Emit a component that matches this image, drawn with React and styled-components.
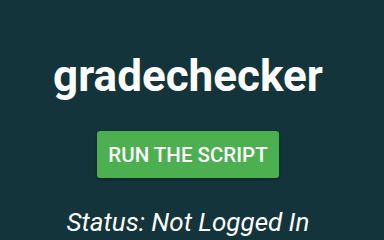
import React from "react";
import styled, { createGlobalStyle } from "styled-components";

const Global = createGlobalStyle`
  html, body { margin: 0; padding: 0; background: #13343a; }
  body { font-family: Roboto, "Noto Sans", sans-serif; }
`;

const Page = styled.div`
  box-sizing: border-box;
  width: 384px;
  height: 240px;
  padding-right: 8px;
  background: #13343a;
  display: flex;
  flex-direction: column;
  align-items: center;
  color: #ffffff;
  overflow: hidden;
`;

const Title = styled.h1`
  margin: 54px 0 0;
  font-size: 44px;
  font-weight: 700;
  line-height: 44px;
`;

const Button = styled.button`
  margin-top: 33px;
  height: 47px;
  padding: 0 11px;
  background: #4caf50;
  color: #ffffff;
  border: none;
  border-radius: 3px;
  font-family: Roboto, sans-serif;
  font-size: 20.5px;
  font-weight: 500;
  box-shadow: 0 2px 3px rgba(0, 0, 0, 0.25);
`;

const Status = styled.p`
  margin: 29px 0 0;
  font-size: 26px;
  font-style: italic;
  line-height: 30px;
`;

export default function App() {
  return (
    <Page>
      <Global />
      <Title>gradechecker</Title>
      <Button>RUN THE SCRIPT</Button>
      <Status>Status: Not Logged In</Status>
    </Page>
  );
}
